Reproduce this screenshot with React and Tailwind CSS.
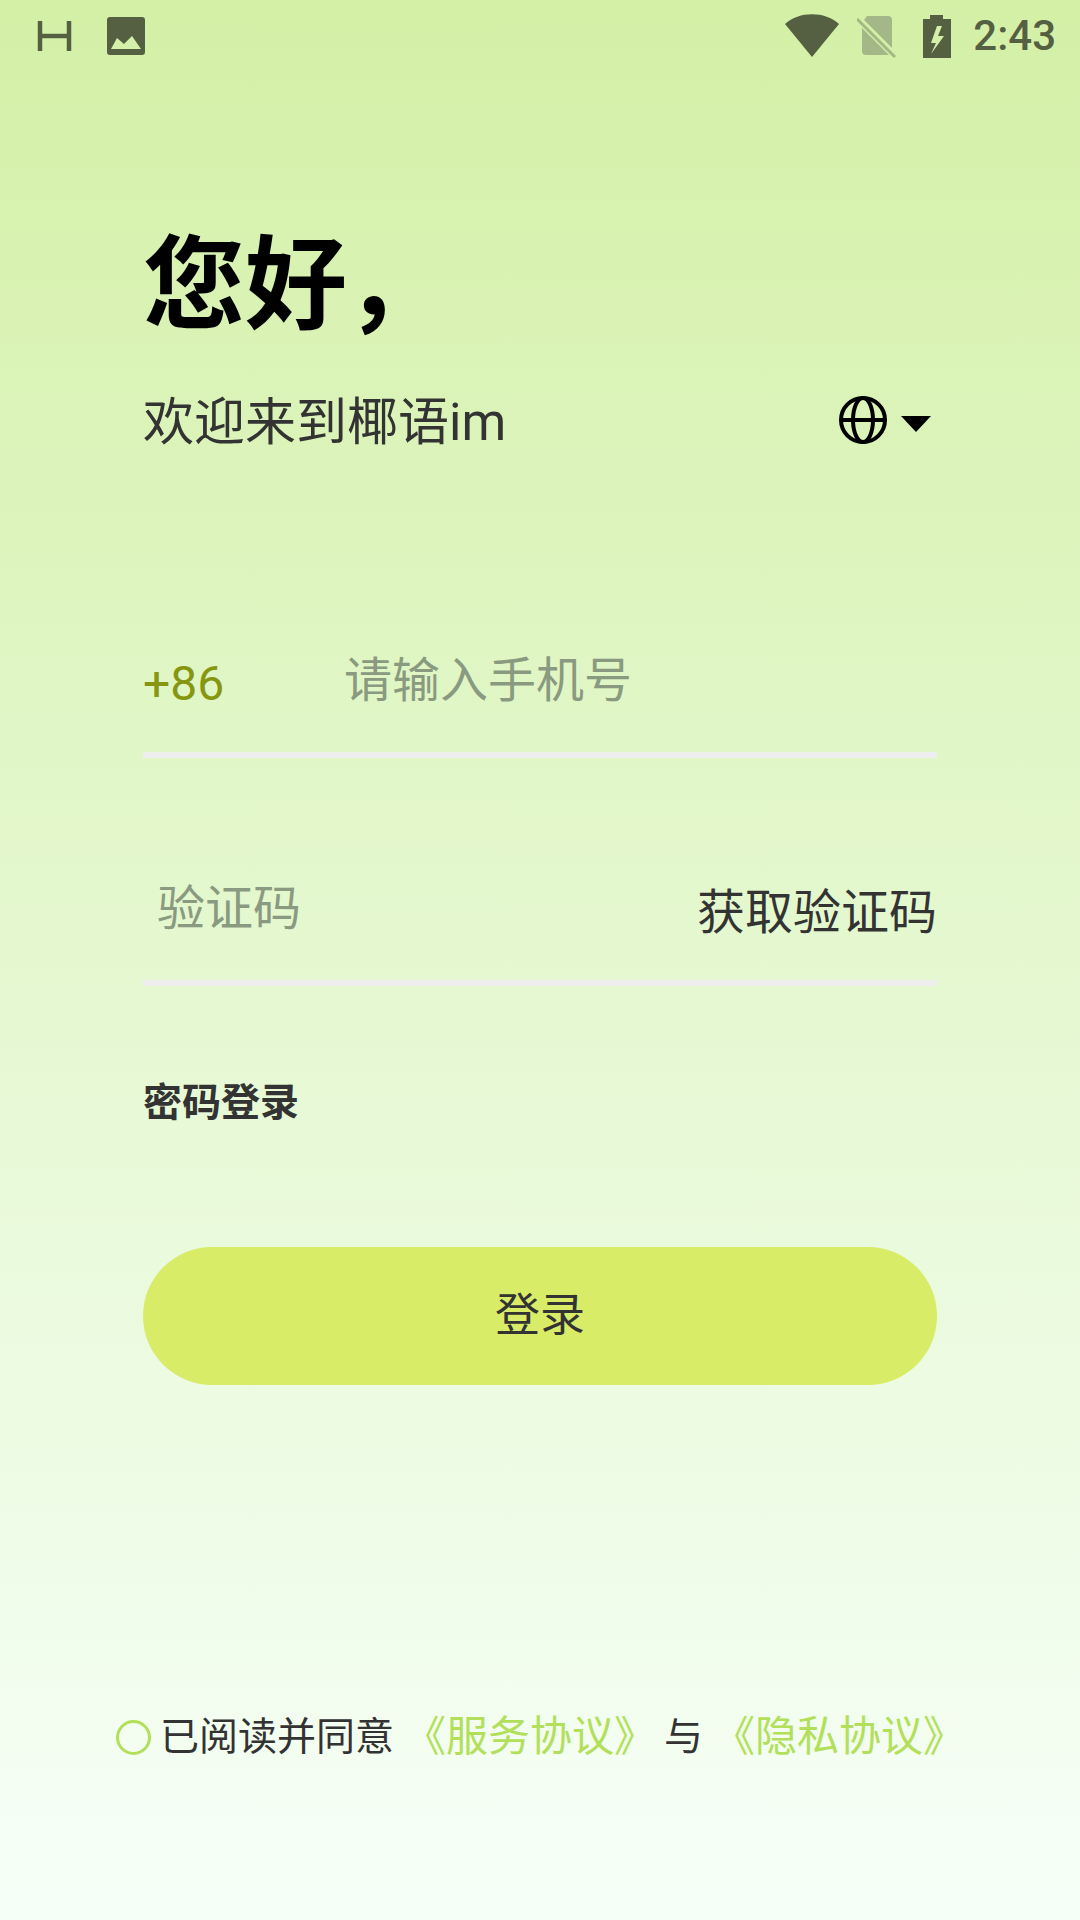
export default function App() {
  return (
    <div className="w-[1080px] h-[1920px] flex flex-col bg-gradient-to-b from-[#d4f0a6] to-[#f6fff8] overflow-hidden font-['Roboto','Noto_Sans_CJK_SC',sans-serif]">
      <div className="h-[72px] flex items-center justify-between pl-[36px] pr-[24px] text-[#555f41]">
        <div className="flex items-center gap-[34px]">
          <svg width="36" height="32" viewBox="0 0 36 32" fill="none" stroke="#555f41" strokeWidth="4.500"><path d="M4 1v30M33 1v30M4 16h29" /></svg>
          <svg width="40" height="40" viewBox="0 0 40 40"><path fill="#555f41" fillRule="evenodd" d="M4 1h32a3 3 0 0 1 3 3v32a3 3 0 0 1-3 3H4a3 3 0 0 1-3-3V4a3 3 0 0 1 3-3ZM5 33h30L26 20l-8 8-7-6Z" /></svg>
        </div>
        <div className="flex items-center">
          <svg width="54" height="44" viewBox="0 0 54 44" className="mr-[18px]"><path fill="#555f41" d="M0 10C14-3 40-3 54 10L27 43Z" /></svg>
          <svg width="40" height="43" viewBox="0 0 40 43" className="mr-[26px]"><path fill="#a3b886" d="M10 1h21a4 4 0 0 1 4 4v28L7 5ZM5 13l27 27H9a4 4 0 0 1-4-4Z" /><path stroke="#a3b886" strokeWidth="3" d="M0 4l38 38" /></svg>
          <svg width="28" height="43" viewBox="0 0 28 43" className="mr-[22px]"><path fill="#555f41" fillRule="evenodd" d="M7 0h13v4h8v39H0V4h7ZM14 11h5l-4 10h6L8 39l5-11H8Z" /></svg>
          <span className="text-[42px] leading-none font-medium">2:43</span>
        </div>
      </div>

      <div className="flex flex-col px-[143px]">
        <h1 className="mt-[148px] h-[132px] text-[102px] leading-[132px] font-bold text-black">您好<span className="-ml-[2px]">，</span></h1>
        <div className="mt-[35px] flex items-center justify-between h-[72px]">
          <span className="text-[51px] leading-[72px] text-[#333333]">欢迎来到椰语im</span>
          <div className="flex items-center gap-[14px] mr-[6px]">
            <svg width="48" height="48" viewBox="0 0 48 48" fill="none" stroke="#000" strokeWidth="4" className="-mt-[6px]"><circle cx="24" cy="24" r="22" /><ellipse cx="24" cy="24" rx="10" ry="22" /><path d="M2 24h44" /></svg>
            <svg width="30" height="16" viewBox="0 0 30 16" className="mt-[2px]"><path d="M0 0h30L15 16Z" fill="#000" /></svg>
          </div>
        </div>

        <div className="mt-[189px] h-[72px] flex items-center">
          <span className="w-[201px] text-[48px] leading-[72px] text-[#869611]">+86</span>
          <span className="text-[48px] leading-[72px] text-[#8a9a80] -mt-[6px]">请输入手机号</span>
        </div>
        <div className="mt-[32px] h-[6px] bg-[#eeeeee]" />

        <div className="mt-[119px] h-[72px] flex items-center justify-between">
          <span className="pl-[14px] text-[48px] leading-[72px] text-[#8a9a80] -mt-[8px]">验证码</span>
          <span className="text-[48px] leading-[72px] text-[#333333]">获取验证码</span>
        </div>
        <div className="mt-[31px] h-[6px] bg-[#eeeeee]" />

        <div className="mt-[90px] text-[39px] leading-[54px] font-bold text-[#333333]">密码登录</div>

        <div className="mt-[117px] h-[138px] rounded-full bg-[#d8ec68] flex items-center justify-center text-[45px] text-[#333333]">登录</div>
      </div>

      <div className="mt-[322px] pl-[116px] flex items-center h-[60px] text-[39px] leading-[60px] whitespace-nowrap text-[#333333]">
        <span className="w-[35px] h-[35px] rounded-full border-[3px] border-[#b2e05a] mr-[9px]" />
        <span>已阅读并同意</span>
        <span className="ml-[10px] text-[42px] text-[#b2e05a]">《服务协议》</span>
        <span className="ml-[8px]">与</span>
        <span className="ml-[10px] text-[42px] text-[#b2e05a]">《隐私协议》</span>
      </div>
    </div>
  );
}
